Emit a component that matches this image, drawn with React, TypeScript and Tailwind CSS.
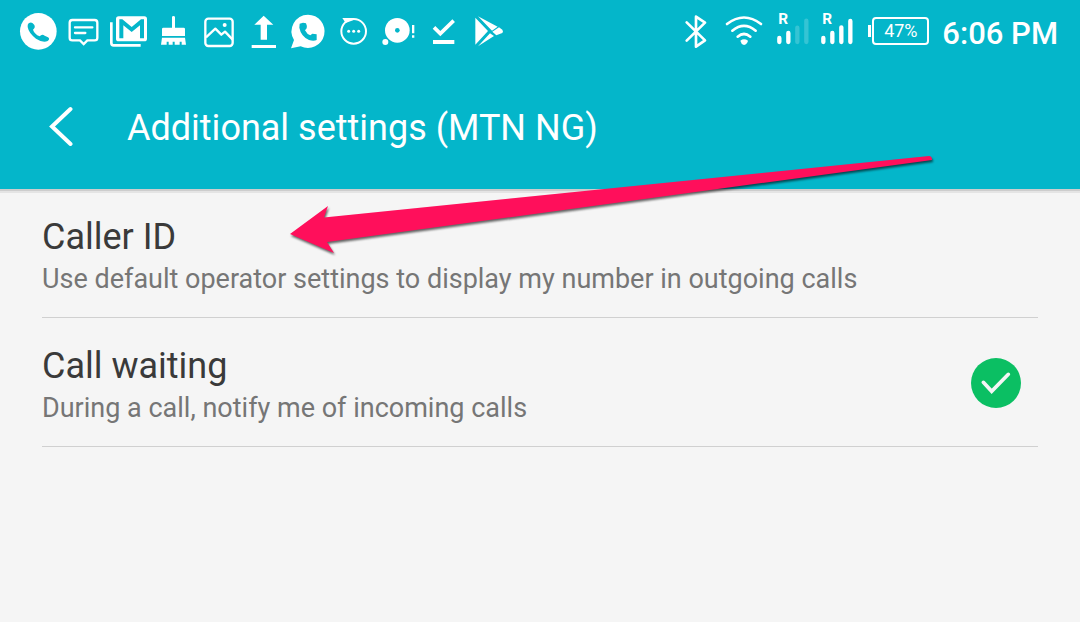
import { useState, type ReactNode } from "react";

function StatusIcon({ box, className, children }: { box: string; className: string; children: ReactNode }) {
  return (
    <svg viewBox={box} className={`h-[55px] shrink-0 ${className}`} fill="none" stroke="none" aria-hidden="true">
      {children}
    </svg>
  );
}

const TEAL = "#04b6ca";

function Notifications() {
  return (
    <div className="flex">
      <StatusIcon box="18 0 135 165" className="w-[45px]">
        <circle cx="85" cy="79" r="55" fill="#fff" />
        <path d="M56 55Q66 48 73 60Q77 68 69 74Q73 87 89 94Q96 86 104 92L114 97Q121 102 113 108Q98 114 78 101Q56 84 53 66Q52 58 56 55Z" fill={TEAL} />
      </StatusIcon>
      <StatusIcon box="153 0 135 165" className="w-[45px]">
        <path d="M187 45H254Q262 45 262 53V98Q262 106 254 106H232L221 117L210 106H187Q179 106 179 98V53Q179 45 187 45Z" stroke="#fff" strokeWidth="7" />
        <path d="M195 67H247M195 84H226" stroke="#fff" strokeWidth="7" strokeLinecap="round" />
      </StatusIcon>
      <StatusIcon box="288 0 135 165" className="w-[45px]">
        <path d="M304 52V114Q304 121 311 121H392" stroke="#fff" strokeWidth="8" />
        <rect x="318" y="34" width="93" height="75" rx="8" fill="#fff" />
        <path d="M328 100V43H337L365 66L393 43H402V100H390V61L365 81L340 61V100Z" fill={TEAL} />
      </StatusIcon>
      <StatusIcon box="423 0 135 165" className="w-[45px]">
        <path d="M486 37Q486 33 490 33Q495 33 495 37V68H521Q525 68 525 72V93H456V72Q456 68 460 68H486Z" fill="#fff" />
        <path d="M456 98H525L528 119H515V110H509V119H494V110H488V119H476V110H470V119H453Z" fill="#fff" />
      </StatusIcon>
      <StatusIcon box="18 0 135 165" className="w-[45px]">
        <rect x="46" y="41" width="82" height="82" rx="9" stroke="#fff" strokeWidth="7" />
        <path d="M48 97L76 71L94 89L105 80L128 104" stroke="#fff" strokeWidth="7" strokeLinejoin="round" />
        <circle cx="104" cy="60" r="6" fill="#fff" />
      </StatusIcon>
      <StatusIcon box="153 0 135 165" className="w-[45px]">
        <path d="M221 32L250 59H231V104H212V59H193ZM185 120H258V129H185Z" fill="#fff" />
      </StatusIcon>
      <StatusIcon box="288 0 135 165" className="w-[45px]">
        <path d="M354 29A50 50 0 1 1 332 124L303 130L312 105A50 50 0 0 1 354 29Z" fill="#fff" />
        <path d="M329 56L339 53L348 55Q352 63 350 70L345 76Q351 88 361 91L367 86L380 88V105Q371 110 357 105Q333 94 328 68Z" fill={TEAL} />
      </StatusIcon>
      <StatusIcon box="423 0 135 165" className="w-[45px]">
        <circle cx="491" cy="79" r="37" stroke="#fff" strokeWidth="6" />
        <path d="M457 39H491V45L467 54Z" fill="#fff" />
        <circle cx="476" cy="79" r="4.5" fill="#fff" />
        <circle cx="491" cy="79" r="4.5" fill="#fff" />
        <circle cx="506" cy="79" r="4.5" fill="#fff" />
      </StatusIcon>
      <StatusIcon box="138 0 135 165" className="w-[45px]">
        <circle cx="202" cy="76" r="37" fill="#fff" />
        <circle cx="202" cy="76" r="7" fill={TEAL} />
        <circle cx="166" cy="111" r="9" fill="#fff" />
        <path d="M246 60H253V85H246ZM246 91H253V98H246Z" fill="#fff" />
      </StatusIcon>
      <StatusIcon box="273 0 135 165" className="w-[45px]">
        <path d="M312 67L331 86L371 47" stroke="#fff" strokeWidth="11" />
        <path d="M309 105H373V117H309Z" fill="#fff" />
      </StatusIcon>
      <StatusIcon box="408 0 135 165" className="w-[45px]">
        <path d="M436 38L474 78L436 119ZM444 34L503 65L486 77ZM444 124L480 85L492 93ZM507 67L517 74Q521 79 517 84L499 91L487 80Z" fill="#fff" />
      </StatusIcon>
    </div>
  );
}

function SystemStatus() {
  return (
    <div className="flex items-center">
      <StatusIcon box="18 0 120 165" className="w-10">
        <path d="M50 52L105 106L78 125V35L105 53L50 107" stroke="#fff" strokeWidth="8" strokeLinecap="round" strokeLinejoin="round" />
      </StatusIcon>
      <StatusIcon box="138 0 150 165" className="w-[50px]">
        <path d="M171 57Q222 18 273 57M187 77Q222 48 257 77M203 95Q222 79 241 95" stroke="#fff" strokeWidth="8" strokeLinecap="round" />
        <path d="M211 107Q222 99 234 107Q232 117 222 120Q213 117 211 107Z" fill="#fff" />
      </StatusIcon>
      <StatusIcon box="312 0 132 165" className="ml-2 w-11">
        <text x="325" y="58" fill="#fff" fontSize="46" fontWeight="700" fontFamily="Roboto">R</text>
        <path d="M328 99V111M355 84V111" stroke="#fff" strokeWidth="13" strokeLinecap="round" />
        <path d="M382 68V111M409 47V111" stroke="#35c4d4" strokeWidth="13" strokeLinecap="round" />
      </StatusIcon>
      <StatusIcon box="444 0 132 165" className="w-11">
        <text x="457" y="58" fill="#fff" fontSize="46" fontWeight="700" fontFamily="Roboto">R</text>
        <path d="M460 99V111M487 84V111M514 67V111M541 48V111" stroke="#fff" strokeWidth="13" strokeLinecap="round" />
      </StatusIcon>
      <div className="ml-[6px] flex items-center pb-1">
        <span className="h-3 w-[3px] bg-white" />
        <span className="ml-px flex h-7 w-[57px] items-center justify-center rounded-[4px] border-2 border-white text-lg">47%</span>
      </div>
      <time className="ml-[13px] pt-0.5 text-[31px] leading-[38px] font-medium">6:06 PM</time>
    </div>
  );
}

function CheckMark({ checked }: { checked: boolean }) {
  return (
    <svg viewBox="63 54 150 150" className="pointer-events-none col-start-1 row-start-1 size-[50px]" fill="none" aria-hidden="true">
      {checked && <path d="M100 127L125 154L175 103" stroke="#f5f5f5" strokeWidth="11" strokeLinecap="round" />}
    </svg>
  );
}

export default function App() {
  const [waiting, setWaiting] = useState(true);

  return (
    <div className="relative min-h-screen overflow-x-hidden bg-[#f5f5f5] font-['Roboto',sans-serif]">
      <header className="bg-[#04b6ca] text-white shadow-[0_2px_0_#cdcdcd,0_4px_0_#e4e4e4]">
        <div className="flex h-[65px] items-center justify-between pr-[22px] pl-4">
          <Notifications />
          <SystemStatus />
        </div>
        <div className="flex h-[124px] items-center">
          <button type="button" aria-label="Back" className="ml-[42px] flex items-center pb-0.5">
            <svg viewBox="0 0 40 40" className="size-10" fill="none" aria-hidden="true">
              <path d="M28.5 3L10 20.5L28.5 38" stroke="#fff" strokeWidth="4" strokeLinecap="round" />
            </svg>
          </button>
          <h1 className="ml-[45px] pt-0.5 text-4xl">Additional settings (MTN NG)</h1>
        </div>
      </header>

      <main className="px-[42px]">
        <button type="button" className="block h-[129px] w-full border-b border-[#d0d0d0] pt-2 text-left">
          <span className="block text-4xl leading-[44px] text-[#3a3a3a]">Caller ID</span>
          <span className="block text-[27px] leading-10 text-[#767676]">
            Use default operator settings to display my number in outgoing calls
          </span>
        </button>
        <label className="flex h-[129px] items-center justify-between border-b border-[#d0d0d0] pr-[17px]">
          <span className="pt-2">
            <span className="block text-4xl leading-[44px] text-[#3a3a3a]">Call waiting</span>
            <span className="block text-[27px] leading-10 text-[#767676]">During a call, notify me of incoming calls</span>
          </span>
          <span className="grid pt-0.5">
            <input
              type="checkbox"
              checked={waiting}
              onChange={(e) => setWaiting(e.target.checked)}
              className="col-start-1 row-start-1 size-[50px] appearance-none rounded-full bg-[#c4c4c4] checked:bg-[#0bbf63]"
            />
            <CheckMark checked={waiting} />
          </span>
        </label>
      </main>

      <svg
        viewBox="280 145 662 120"
        className="pointer-events-none absolute top-[145px] left-[280px] h-[120px] w-[662px] drop-shadow-[1px_2px_1px_rgba(0,0,0,0.6)]"
        aria-hidden="true"
      >
        <path d="M290 234L328 206L324 217.5L929 156Q932 156 932 160L327 242L334 253Z" fill="#ff0f5b" />
      </svg>
    </div>
  );
}
